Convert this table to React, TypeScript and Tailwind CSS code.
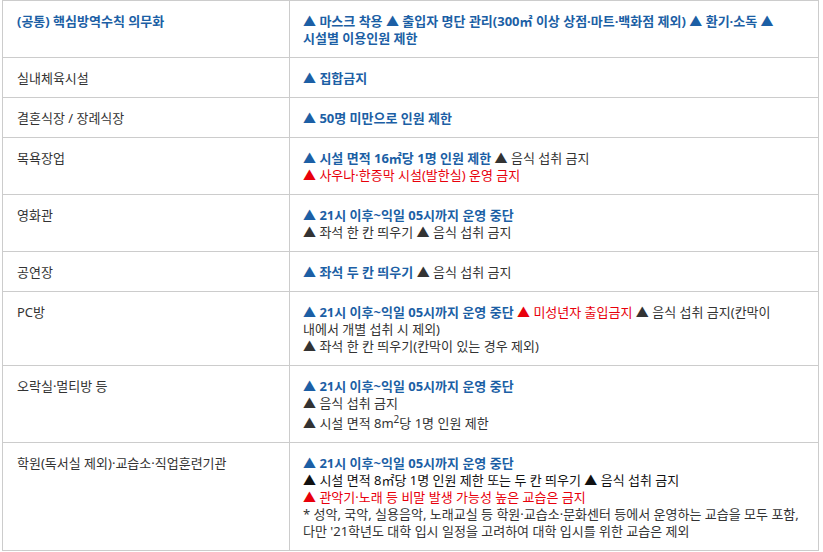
import React from 'react';

const B = ({ children }: { children: React.ReactNode }) => (
  <span className="font-bold text-[#1c5fa5]">{children}</span>
);
const R = ({ children }: { children: React.ReactNode }) => (
  <span className="text-[#e8000b]">{children}</span>
);

interface Row {
  name: React.ReactNode;
  lines: React.ReactNode[];
}

const rows: Row[] = [
  {
    name: <B>(공통) 핵심방역수칙 의무화</B>,
    lines: [
      <B>▲ 마스크 착용 ▲ 출입자 명단 관리(300㎡ 이상 상점·마트·백화점 제외) ▲ 환기·소독 ▲</B>,
      <B>시설별 이용인원 제한</B>,
    ],
  },
  { name: '실내체육시설', lines: [<B>▲ 집합금지</B>] },
  { name: '결혼식장 / 장례식장', lines: [<B>▲ 50명 미만으로 인원 제한</B>] },
  {
    name: '목욕장업',
    lines: [
      <>
        <B>▲ 시설 면적 16㎡당 1명 인원 제한</B> ▲ 음식 섭취 금지
      </>,
      <R>▲ 사우나·한증막 시설(발한실) 운영 금지</R>,
    ],
  },
  {
    name: '영화관',
    lines: [<B>▲ 21시 이후~익일 05시까지 운영 중단</B>, '▲ 좌석 한 칸 띄우기 ▲ 음식 섭취 금지'],
  },
  {
    name: '공연장',
    lines: [
      <>
        <B>▲ 좌석 두 칸 띄우기</B> ▲ 음식 섭취 금지
      </>,
    ],
  },
  {
    name: 'PC방',
    lines: [
      <>
        <B>▲ 21시 이후~익일 05시까지 운영 중단</B> <R>▲ 미성년자 출입금지</R> ▲ 음식 섭취 금지(칸막이
      </>,
      '내에서 개별 섭취 시 제외)',
      '▲ 좌석 한 칸 띄우기(칸막이 있는 경우 제외)',
    ],
  },
  {
    name: '오락실·멀티방 등',
    lines: [
      <B>▲ 21시 이후~익일 05시까지 운영 중단</B>,
      '▲ 음식 섭취 금지',
      <span className="block pt-[3px]">
        ▲ 시설 면적 8m<sup className="text-[10px] leading-none">2</sup>당 1명 인원 제한
      </span>,
    ],
  },
  {
    name: '학원(독서실 제외)·교습소·직업훈련기관',
    lines: [
      <B>▲ 21시 이후~익일 05시까지 운영 중단</B>,
      <span className="text-[#111]">▲ 시설 면적 8㎡당 1명 인원 제한 또는 두 칸 띄우기 ▲ 음식 섭취 금지</span>,
      <R>▲ 관악기·노래 등 비말 발생 가능성 높은 교습은 금지</R>,
      '* 성악, 국악, 실용음악, 노래교실 등 학원·교습소·문화센터 등에서 운영하는 교습을 모두 포함,',
      "다만 '21학년도 대학 입시 일정을 고려하여 대학 입시를 위한 교습은 제외",
    ],
  },
];

export default function App() {
  return (
    <div
      className="w-[823px] h-[552px] bg-white pl-[2px] text-[13px] leading-[17px] text-[#333]"
      style={{ fontFamily: '"Noto Sans", "Noto Sans CJK KR", sans-serif' }}
    >
      <table className="w-[817px] border-collapse table-fixed">
        <colgroup>
          <col className="w-[287px]" />
          <col />
        </colgroup>
        <tbody>
          {rows.map((row, i) => (
            <tr key={i}>
              <td className="border border-[#cccccc] align-top pl-[14px] pr-2 pt-3 pb-[10px] whitespace-nowrap">
                <div className="h-[17px]">{row.name}</div>
              </td>
              <td className="border border-[#cccccc] align-top pl-[13px] pr-2 pt-3 pb-[10px] whitespace-nowrap">
                {row.lines.map((line, j) => (
                  <div
                    key={j}
                    className={i === 7 && j === 2 ? 'h-[20px]' : 'h-[17px]'}
                  >
                    {line}
                  </div>
                ))}
              </td>
            </tr>
          ))}
        </tbody>
      </table>
    </div>
  );
}
